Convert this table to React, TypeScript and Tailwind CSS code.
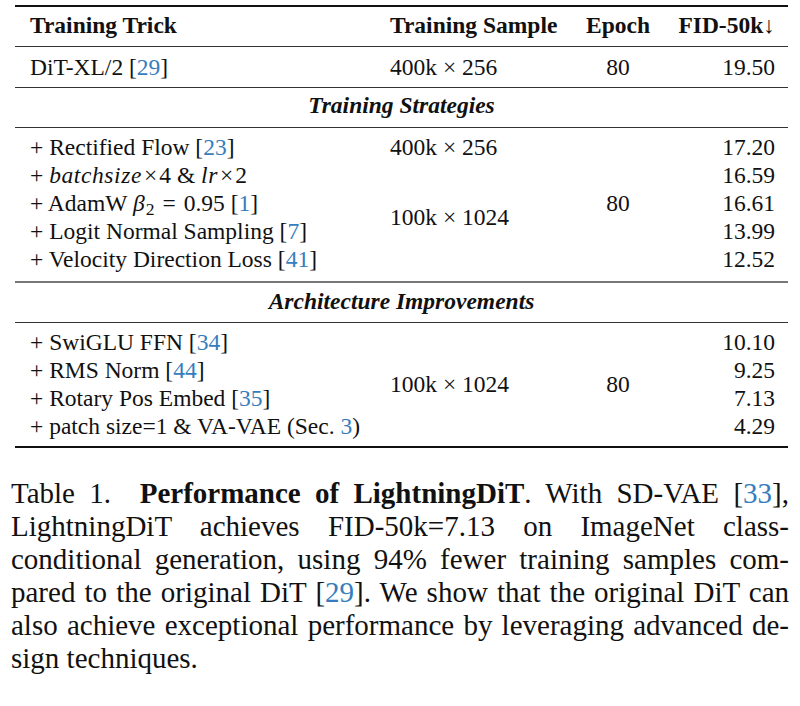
const Cite = ({ n }: { n: string }) => (
  <>
    [<span className="text-[#367dbd]">{n}</span>]
  </>
);

const Rule = ({ thick = false }: { thick?: boolean }) => (
  <div className={thick ? "h-[2px] bg-[#111]" : "h-px bg-[#333]"} />
);

const cols = "grid grid-cols-[363px_197px_86px_127px]";

export default function App() {
  return (
    <div className="w-[800px] h-[706px] bg-white text-[#111] [font-family:'Liberation_Serif','Times_New_Roman',serif] overflow-hidden">
      {/* table */}
      <div className="ml-[15px] w-[773px] pt-[5px] text-[23.5px]">
        <Rule thick />
        <div className={`${cols} font-bold leading-[36px] pb-[3px]`}>
          <div className="pl-[15px]">Training Trick</div>
          <div className="pl-[12px]">Training Sample</div>
          <div className="text-center">Epoch</div>
          <div className="text-right pr-[13px]">
            FID-50k<span className="font-normal">↓</span>
          </div>
        </div>
        <Rule />
        <div className={`${cols} h-[40px] leading-[40px]`}>
          <div className="pl-[15px]">
            DiT-XL/2 <Cite n="29" />
          </div>
          <div className="pl-[12px]">400k × 256</div>
          <div className="text-center">80</div>
          <div className="text-right pr-[13px]">19.50</div>
        </div>
        <Rule />
        <div className="h-[39px] leading-[34px] text-center font-bold italic">
          Training Strategies
        </div>
        <Rule />

        {/* training strategies */}
        <div className={`${cols} grid-rows-[repeat(5,28px)] leading-[28px] pt-[5px] pb-[8px]`}>
          <div className="col-start-1 row-start-1 pl-[15px]">
            + Rectified Flow <Cite n="23" />
          </div>
          <div className="col-start-1 row-start-2 pl-[15px]">
            + <i className="tracking-[0.6px]">batchsize</i>
            <span className="px-[2px]">×</span>4 &amp; <i className="tracking-[0.6px]">lr</i>
            <span className="px-[2px]">×</span>2
          </div>
          <div className="col-start-1 row-start-3 pl-[15px]">
            + AdamW <i className="pr-[1px]">β</i>
            <sub>2</sub>
            <span className="px-[8px]">=</span>0.95 <Cite n="1" />
          </div>
          <div className="col-start-1 row-start-4 pl-[15px]">
            + Logit Normal Sampling <Cite n="7" />
          </div>
          <div className="col-start-1 row-start-5 pl-[15px]">
            + Velocity Direction Loss <Cite n="41" />
          </div>

          <div className="col-start-2 row-start-1 pl-[12px]">400k × 256</div>
          <div className="col-start-2 row-start-2 row-span-4 flex items-center pl-[12px]">
            100k × 1024
          </div>
          <div className="col-start-3 row-start-1 row-span-5 flex items-center justify-center">
            80
          </div>

          <div className="col-start-4 row-start-1 text-right pr-[13px]">17.20</div>
          <div className="col-start-4 row-start-2 text-right pr-[13px]">16.59</div>
          <div className="col-start-4 row-start-3 text-right pr-[13px]">16.61</div>
          <div className="col-start-4 row-start-4 text-right pr-[13px]">13.99</div>
          <div className="col-start-4 row-start-5 text-right pr-[13px]">12.52</div>
        </div>
        <div className="h-[2px] bg-[#777]" />
        <div className="h-[39px] leading-[36px] text-center font-bold italic">
          Architecture Improvements
        </div>
        <Rule />

        {/* architecture */}
        <div className={`${cols} grid-rows-[repeat(4,28px)] leading-[28px] pt-[5px] pb-[6px]`}>
          <div className="col-start-1 row-start-1 pl-[15px]">
            + SwiGLU FFN <Cite n="34" />
          </div>
          <div className="col-start-1 row-start-2 pl-[15px]">
            + RMS Norm <Cite n="44" />
          </div>
          <div className="col-start-1 row-start-3 pl-[15px]">
            + Rotary Pos Embed <Cite n="35" />
          </div>
          <div className="col-start-1 row-start-4 pl-[15px]">
            + patch size=1 &amp; VA-VAE (Sec. <span className="text-[#367dbd]">3</span>)
          </div>

          <div className="col-start-2 row-start-1 row-span-4 flex items-center pl-[12px]">
            100k × 1024
          </div>
          <div className="col-start-3 row-start-1 row-span-4 flex items-center justify-center">
            80
          </div>

          <div className="col-start-4 row-start-1 text-right pr-[13px]">10.10</div>
          <div className="col-start-4 row-start-2 text-right pr-[13px]">9.25</div>
          <div className="col-start-4 row-start-3 text-right pr-[13px]">7.13</div>
          <div className="col-start-4 row-start-4 text-right pr-[13px]">4.29</div>
        </div>
        <Rule thick />
      </div>

      {/* caption */}
      <div className="ml-[11px] w-[778px] mt-[29px] text-[29px] leading-[33px]">
        <div className="text-justify [text-align-last:justify]">
          Table 1.&nbsp; <b>Performance of LightningDiT</b>. With SD-VAE <Cite n="33" />,
        </div>
        <div className="text-justify [text-align-last:justify]">
          LightningDiT achieves FID-50k=7.13 on ImageNet class-
        </div>
        <div className="text-justify [text-align-last:justify]">
          conditional generation, using 94% fewer training samples com-
        </div>
        <div className="text-justify [text-align-last:justify]">
          pared to the original DiT <Cite n="29" />. We show that the original DiT can
        </div>
        <div className="text-justify [text-align-last:justify]">
          also achieve exceptional performance by leveraging advanced de-
        </div>
        <div>sign techniques.</div>
      </div>
    </div>
  );
}
